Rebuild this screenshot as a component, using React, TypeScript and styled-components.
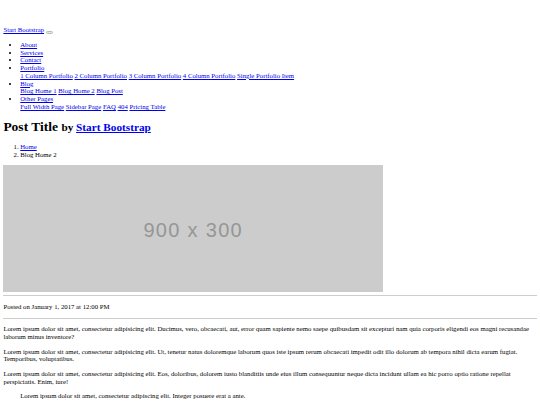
import React from 'react'
import styled, { createGlobalStyle } from 'styled-components'

// the page is an unstyled bootstrap template photographed at 1280px and shrunk to 540px
const k = (n: number) => `${(n * 0.421875).toFixed(3)}px`

const GlobalStyle = createGlobalStyle`
    body {
        margin: ${k(8)};
        padding-top: ${k(54)};
        font-family: "Liberation Serif", "Times New Roman", serif;
        font-size: ${k(16)};
        line-height: ${k(18.4)};
        color: #000;
        background: #fff;
    }
    a {
        color: #0000ee;
    }
`

const Nav = styled.nav``

const Brand = styled.a``

const Toggler = styled.button`
    display: inline-block;
    width: ${k(17)};
    height: ${k(7)};
    margin-left: ${k(4)};
    padding: 0;
    border: 1px solid #b9b9b9;
    border-radius: 1.5px;
    background: #e6e6e6;
    vertical-align: -1px;
`

const NavList = styled.ul`
    margin: ${k(16)} 0;
    padding-left: ${k(40)};
`

const DropMenu = styled.div``

const Title = styled.h1`
    font-size: ${k(32)};
    line-height: 1.15;
    margin: ${k(19)} 0 ${k(21.44)};
`

const Byline = styled.small`
    font-size: ${k(26.67)};
`

const Crumbs = styled.ol`
    margin: ${k(16)} 0 ${k(15.5)};
    padding-left: ${k(40)};
`

const Placeholder = styled.div`
    width: ${k(900)};
    height: ${k(300)};
    background: #cccccc;
    display: flex;
    align-items: center;
    justify-content: center;
    padding-top: 3px;
    box-sizing: border-box;
    margin-bottom: 2px;
    font-family: "Liberation Sans", Arial, sans-serif;
    font-size: 20px;
    line-height: 1;
    letter-spacing: 1.3px;
    color: #969696;
`

const Rule = styled.hr`
    margin: ${k(8)} 0;
    border: 0;
    border-top: 1px solid #cdcdcd;
    height: 0;
`

const Text = styled.p`
    margin: ${k(16)} 0;
`

const Quote = styled.blockquote`
    margin: ${k(16)} ${k(40)};
`

const menus: { label: string; items?: string[] }[] = [
    { label: 'About' },
    { label: 'Services' },
    { label: 'Contact' },
    {
        label: 'Portfolio',
        items: ['1 Column Portfolio', '2 Column Portfolio', '3 Column Portfolio', '4 Column Portfolio', 'Single Portfolio Item'],
    },
    { label: 'Blog', items: ['Blog Home 1', 'Blog Home 2', 'Blog Post'] },
    { label: 'Other Pages', items: ['Full Width Page', 'Sidebar Page', 'FAQ', '404', 'Pricing Table'] },
]

const paragraphs = [
    'Lorem ipsum dolor sit amet, consectetur adipisicing elit. Ducimus, vero, obcaecati, aut, error quam sapiente nemo saepe quibusdam sit excepturi nam quia corporis eligendi eos magni recusandae laborum minus inventore?',
    'Lorem ipsum dolor sit amet, consectetur adipisicing elit. Ut, tenetur natus doloremque laborum quos iste ipsum rerum obcaecati impedit odit illo dolorum ab tempora nihil dicta earum fugiat. Temporibus, voluptatibus.',
    'Lorem ipsum dolor sit amet, consectetur adipisicing elit. Eos, doloribus, dolorem iusto blanditiis unde eius illum consequuntur neque dicta incidunt ullam ea hic porro optio ratione repellat perspiciatis. Enim, iure!',
]

const App: React.FC = () => {
    return (
        <>
            <GlobalStyle />
            <Nav>
                <Brand href="#">Start Bootstrap</Brand>
                <Toggler type="button" aria-label="Toggle navigation"></Toggler>
                <NavList>
                    {menus.map((m) => (
                        <li key={m.label}>
                            <a href="#">{m.label}</a>
                            {m.items && (
                                <DropMenu>
                                    {m.items.map((item, i) => (
                                        <React.Fragment key={item}>
                                            {i > 0 && ' '}
                                            <a href="#">{item}</a>
                                        </React.Fragment>
                                    ))}
                                </DropMenu>
                            )}
                        </li>
                    ))}
                </NavList>
            </Nav>

            <div>
                <Title>
                    Post Title <Byline>by <a href="#">Start Bootstrap</a></Byline>
                </Title>

                <Crumbs>
                    <li><a href="#">Home</a></li>
                    <li>Blog Home 2</li>
                </Crumbs>

                <Placeholder>900 x 300</Placeholder>

                <Rule />
                <Text>Posted on January 1, 2017 at 12:00 PM</Text>
                <Rule />

                {paragraphs.map((p, i) => (
                    <Text key={i}>{p}</Text>
                ))}

                <Quote>
                    <Text>Lorem ipsum dolor sit amet, consectetur adipiscing elit. Integer posuere erat a ante.</Text>
                </Quote>
            </div>
        </>
    )
}

export default App
